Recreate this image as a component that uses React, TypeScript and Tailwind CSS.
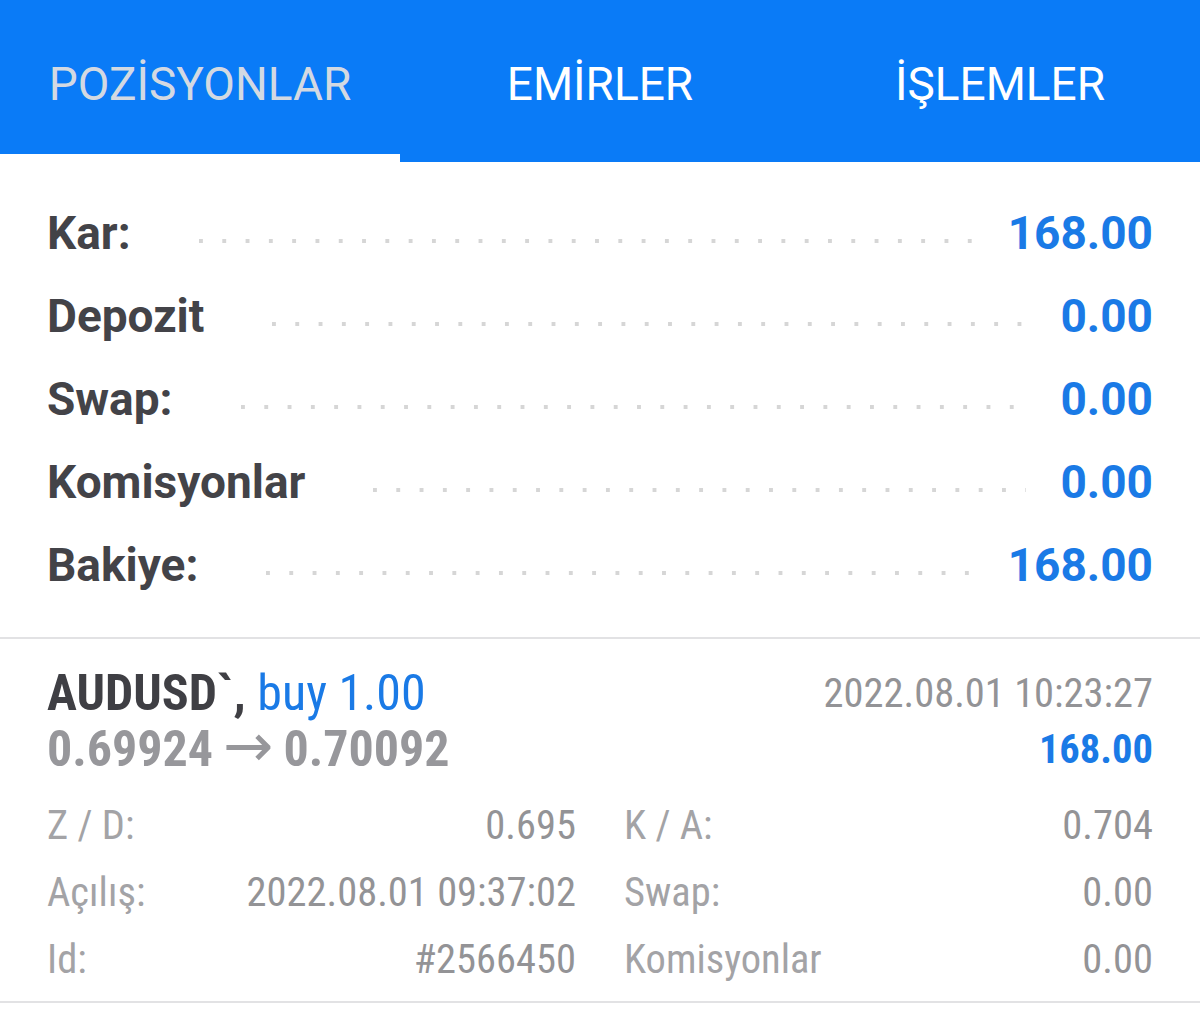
import React from "react";

const summary = [
  { label: "Kar:", value: "168.00" },
  { label: "Depozit", value: "0.00" },
  { label: "Swap:", value: "0.00" },
  { label: "Komisyonlar", value: "0.00" },
  { label: "Bakiye:", value: "168.00" },
];

function Tabs() {
  return (
    <nav className="flex h-[162px] bg-[#0a7bf7]">
      <div className="relative flex w-[400px] items-center justify-center pt-[6px]">
        <span className="text-[46px] text-[#d3d9e2]">POZİSYONLAR</span>
        <div className="absolute bottom-0 left-0 h-[8px] w-full bg-white" />
      </div>
      <div className="flex w-[400px] items-center justify-center pt-[6px]">
        <span className="text-[46px] text-white">EMİRLER</span>
      </div>
      <div className="flex w-[400px] items-center justify-center pt-[6px]">
        <span className="text-[46px] text-white">İŞLEMLER</span>
      </div>
    </nav>
  );
}

function SummaryRow({ label, value }: { label: string; value: string }) {
  return (
    <div className="flex h-[83px] items-center">
      <span className="font-bold text-[#434348] text-[46px]">{label}</span>
      <span className="ml-[68px] mr-[34px] mt-[14px] h-[4px] flex-1 bg-[linear-gradient(to_right,#d6d6d6_4px,transparent_4px)] bg-[length:23.3px_4px] bg-repeat-x" />
      <span className="font-bold text-[#1a7ae6] text-[46px]">{value}</span>
    </div>
  );
}

function Detail({ label, value }: { label: string; value: string }) {
  return (
    <div className="flex h-[67px] items-center justify-between">
      <span className="text-[#a3a3a6]">{label}</span>
      <span className="text-[#939396]">{value}</span>
    </div>
  );
}

export default function App() {
  return (
    <div className="w-[1200px] h-[1010px] bg-white font-['Roboto',sans-serif]">
      <Tabs />

      <section className="px-[47px] pt-[30px] pb-[30px] border-b-2 border-[#e2e2e4]">
        {summary.map((s) => (
          <SummaryRow key={s.label} label={s.label} value={s.value} />
        ))}
      </section>

      <section className="px-[47px] pt-[26px] pb-[8px] border-b-2 border-[#e2e2e4] [font-stretch:condensed]">
        <div className="flex justify-between">
          <div className="flex flex-col leading-[56px]">
            <span className="text-[50px]">
              <span className="font-bold text-[#3f3f44]">AUDUSD`, </span>
              <span className="text-[#1a7ae6]">buy 1.00</span>
            </span>
            <span className="h-[56px] font-bold text-[50px] text-[#97979b]">
              0.69924
              <span className="mx-[10px] font-['DejaVu_Sans',sans-serif] text-[60px] leading-[0px] font-normal [font-stretch:normal]">→</span>
              0.70092
            </span>
          </div>
          <div className="flex flex-col items-end leading-[56px]">
            <span className="text-[40.5px] text-[#939396]">2022.08.01 10:23:27</span>
            <span className="font-bold text-[40.5px] text-[#1a7ae6]">168.00</span>
          </div>
        </div>

        <div className="mt-[15px] grid grid-cols-2 gap-x-[48px] text-[40.5px]">
          <div>
            <Detail label="Z / D:" value="0.695" />
            <Detail label="Açılış:" value="2022.08.01 09:37:02" />
            <Detail label="Id:" value="#2566450" />
          </div>
          <div>
            <Detail label="K / A:" value="0.704" />
            <Detail label="Swap:" value="0.00" />
            <Detail label="Komisyonlar" value="0.00" />
          </div>
        </div>
      </section>
    </div>
  );
}
